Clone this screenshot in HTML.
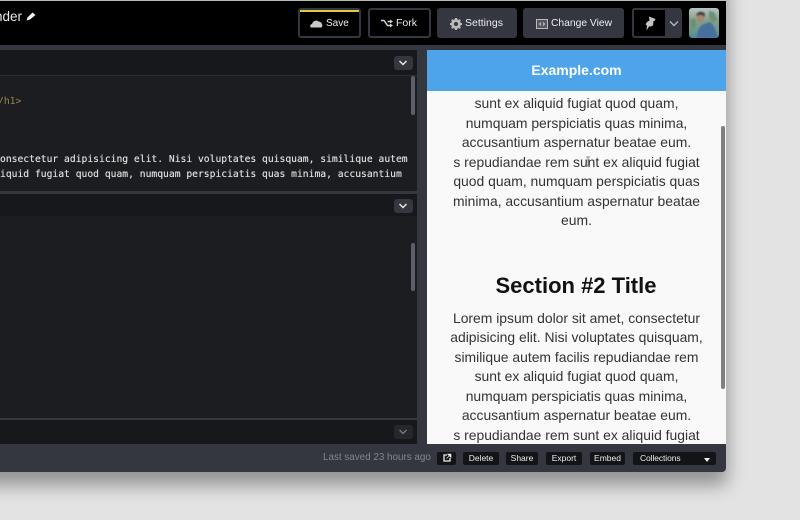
<!DOCTYPE html>
<html><head><meta charset="utf-8"><style>
*{box-sizing:border-box;margin:0;padding:0}
html,body{width:800px;height:520px;overflow:hidden;background:#e3e3e3;font-family:"Liberation Sans",sans-serif}
.a{position:absolute}
.win{left:-30px;top:-30px;width:756px;height:502px;background:#343640;border-radius:0 0 4px 0;box-shadow:1px 13px 18px rgba(0,0,0,.36)}
.btn{position:absolute;top:8px;height:30px;border-radius:3px}
.blk{background:#000;border:2px solid #343640}
.gry{background:#343640}
.t{position:absolute;top:17px;color:#ededef;font-size:10.5px;line-height:13px;white-space:nowrap}
.chev{position:absolute;left:393.500px;width:19px;height:14px;background:#343640;border-radius:3px}
.code{position:absolute;left:0;white-space:pre;font:9.68px/15px "DejaVu Sans Mono",monospace;color:#dcdcdc;text-shadow:0 0 .4px #dcdcdc}
.l{position:absolute;left:427px;width:299px;text-align:center;font-size:13.900px;line-height:20px;color:#333;white-space:nowrap}
.f{position:absolute;top:452px;height:13px;background:#131417;border-radius:2px;color:#ededef;font-size:8.500px;line-height:13px;text-align:center}
</style></head><body>
<div class="a win"></div>
<div class="a" style="left:0;top:0;width:726px;height:1px;background:#bbb"></div>
<div class="a" style="left:0;top:1px;width:726px;height:44px;background:#000"></div>
<div class="a" style="left:-20px;top:8px;width:42px;text-align:right;color:#e6e6e6;font-size:13.500px;line-height:18px;white-space:nowrap">nder</div>
<svg class="a" style="left:26px;top:11px" width="10" height="10" viewBox="0 0 10 10"><path d="M.5 9.500l1-3L6.500 1.500 9.500 4 4 8.500z" fill="#f2f2f2"/></svg>

<div class="btn blk" style="left:298px;width:63px"></div>
<div class="a" style="left:300px;top:10px;width:59px;height:2px;background:#e2c84e"></div>
<svg class="a" style="left:310px;top:19px" width="13" height="9" viewBox="0 0 13 9"><path d="M1 8.500C-.5 7.500.2 5.200 2 5 3 2 6.500.5 8.500 2.500c1.800 0 3.500 1.500 3.500 3 .8 1.500 0 3-1 3z" fill="#c9c9cb"/></svg>
<div class="t" style="left:326px;font-size:10px">Save</div>

<div class="btn blk" style="left:368px;width:63px"></div>
<svg class="a" style="left:381px;top:19px" width="12" height="9" viewBox="0 0 12 9"><path d="M0 1.500h3l3.500 5h2.500M6.500 2.500H9" stroke="#d0d0d2" stroke-width="1.500" fill="none"/><path d="M9 .5L12 2.500 9 4.500zM9 4.500l3 2-3 2z" fill="#d0d0d2"/></svg>
<div class="t" style="left:396px">Fork</div>

<div class="btn gry" style="left:437px;width:80px"></div>
<svg class="a" style="left:450px;top:18px" width="12" height="12" viewBox="0 0 12 12"><circle cx="6" cy="6" r="3.500" fill="none" stroke="#b9b9bc" stroke-width="3"/><path d="M6 0v2.500M6 9.500V12M0 6h2.500M9.500 6H12M1.800 1.800l1.700 1.700M8.500 8.500l1.700 1.700M1.800 10.200l1.700-1.700M8.500 3.500l1.700-1.700" stroke="#b9b9bc" stroke-width="2"/></svg>
<div class="t" style="left:465px">Settings</div>

<div class="btn gry" style="left:523px;width:101px"></div>
<svg class="a" style="left:536px;top:19px" width="12" height="10" viewBox="0 0 12 10"><rect x=".5" y=".5" width="11" height="9" fill="#55565e" stroke="#b9b9bc"/><path d="M5 3.500L3.500 5 5 6.500M7 3.500L8.500 5 7 6.500" stroke="#d5d5d7" fill="none" stroke-width=".9"/></svg>
<div class="t" style="left:551px;font-size:10.300px">Change View</div>

<div class="btn gry" style="left:632px;width:50px"></div>
<div class="btn blk" style="left:632px;width:35px;border-radius:3px 0 0 3px"></div>
<svg class="a" style="left:644px;top:16px" width="12" height="15" viewBox="0 0 12 15"><path d="M5 .5L11.500 3 10.500 5H9.500L9 9.500 6.500 10.500H5L2.500 14.500 3 9.500 1.500 8.500 3 6 5.500 4.500z" fill="#c4c4c6"/></svg>
<svg class="a" style="left:669px;top:20px" width="10" height="7" viewBox="0 0 10 7"><path d="M1 1.500l4 4 4-4" fill="none" stroke="#b8b8bb" stroke-width="1.400"/></svg>

<svg class="a" style="left:689px;top:8px;border-radius:3px" width="30" height="30" viewBox="0 0 30 30"><defs><linearGradient id="g" x1="0" y1="0" x2="0" y2="1"><stop offset="0" stop-color="#b8c4c4"/><stop offset=".4" stop-color="#83a08a"/><stop offset=".75" stop-color="#6b9a8c"/><stop offset="1" stop-color="#4f8a9c"/></linearGradient><filter id="b"><feGaussianBlur stdDeviation=".7"/></filter></defs><rect width="30" height="30" fill="url(#g)"/><g filter="url(#b)"><path d="M20 3l5 1 3 7-4 4-4-6zM1 12l5-2 1 8-4 4z" fill="#6e8f74"/><path d="M8 30c0-7 2-12 7-14l6-2c3 2 5 6 6 10l2 6z" fill="#4a6f9b"/><ellipse cx="11.500" cy="9" rx="4" ry="5.500" fill="#a98672"/><path d="M7.500 6c2-3 7-3 8.500 0l-.5 3c-2-2.500-5-2.500-8-1z" fill="#47423e"/></g></svg>

<!-- left panes -->
<div class="a" style="left:0;top:50px;width:417px;height:394px;background:#1c1d21"></div>
<div class="a" style="left:0;top:50px;width:417px;height:26px;background:#17181b;border-bottom:1px solid #2c2e35"></div>
<div class="chev" style="top:56px"></div>
<svg class="a" style="left:398px;top:60px" width="10" height="6" viewBox="0 0 10 6"><path d="M1.500 1l3.500 3.500L8.500 1" fill="none" stroke="#e6e6e6" stroke-width="1.500"/></svg>
<div class="a" style="left:411px;top:76px;width:4px;height:39px;background:#5c5f69;border-radius:2px"></div>
<div class="code" style="top:94px;left:-2px;color:#97854f;text-shadow:none">/h1&gt;</div>
<div class="code" style="top:152px">onsectetur adipisicing elit. Nisi voluptates quisquam, similique autem</div>
<div class="code" style="top:167px">iquid fugiat quod quam, numquam perspiciatis quas minima, accusantium</div>

<div class="a" style="left:0;top:191px;width:417px;height:3px;background:#343640"></div>
<div class="a" style="left:0;top:194px;width:417px;height:22px;background:#17181b"></div>
<div class="chev" style="top:198.500px"></div>
<svg class="a" style="left:398px;top:202.500px" width="10" height="6" viewBox="0 0 10 6"><path d="M1.500 1l3.500 3.500L8.500 1" fill="none" stroke="#e6e6e6" stroke-width="1.500"/></svg>
<div class="a" style="left:411px;top:243px;width:4px;height:48px;background:#5c5f69;border-radius:2px"></div>

<div class="a" style="left:0;top:418px;width:417px;height:2px;background:#343640"></div>
<div class="a" style="left:0;top:420px;width:417px;height:24px;background:#17181b"></div>
<div class="chev" style="top:425px;background:#26272c"></div>
<svg class="a" style="left:398px;top:429px" width="10" height="6" viewBox="0 0 10 6"><path d="M1.500 1l3.500 3.500L8.500 1" fill="none" stroke="#74767c" stroke-width="1.500"/></svg>

<!-- preview -->
<div class="a" style="left:427px;top:50px;width:299px;height:394px;background:#f9f9f9"></div>
<div class="a" style="left:427px;top:50px;width:299px;height:41px;background:#4ea4e8;color:#fff;font-weight:bold;font-size:14px;line-height:40px;text-align:center">Example.com</div>
<div class="l" style="top:93px">sunt ex aliquid fugiat quod quam,</div>
<div class="l" style="top:112.500px">numquam perspiciatis quas minima,</div>
<div class="l" style="top:132px">accusantium aspernatur beatae eum.</div>
<div class="l" style="top:151.500px">s repudiandae rem sunt ex aliquid fugiat</div>
<div class="l" style="top:171px">quod quam, numquam perspiciatis quas</div>
<div class="l" style="top:190.500px">minima, accusantium aspernatur beatae</div>
<div class="l" style="top:210px">eum.</div>
<svg class="a" style="left:585px;top:156px" width="6" height="11" viewBox="0 0 6 11"><path d="M1 1h4M3 1v9M1 10h4" stroke="#8a8a8a" stroke-width="1" fill="none"/></svg>
<div class="l" style="top:272px;font-size:22px;font-weight:bold;line-height:28px;color:#111;padding-right:1px">Section #2 Title</div>
<div class="l" style="top:307.500px">Lorem ipsum dolor sit amet, consectetur</div>
<div class="l" style="top:327px">adipisicing elit. Nisi voluptates quisquam,</div>
<div class="l" style="top:346.500px">similique autem facilis repudiandae rem</div>
<div class="l" style="top:366px">sunt ex aliquid fugiat quod quam,</div>
<div class="l" style="top:385.500px">numquam perspiciatis quas minima,</div>
<div class="l" style="top:405px">accusantium aspernatur beatae eum.</div>
<div class="l" style="top:424.500px;height:19.500px;overflow:hidden">s repudiandae rem sunt ex aliquid fugiat</div>
<div class="a" style="left:721px;top:126px;width:4px;height:263px;background:#7f7f7f;border-radius:2px"></div>

<!-- footer -->
<div class="a" style="left:323px;top:451px;color:#85868c;font-size:9.850px;line-height:14px;white-space:nowrap">Last saved 23 hours ago</div>
<div class="f" style="left:437px;width:19px"></div>
<svg class="a" style="left:442px;top:453px" width="10" height="10" viewBox="0 0 10 10"><path d="M5 2H2v6h6V5" fill="none" stroke="#eee" stroke-width="1.300"/><path d="M4.500 5.500L8 2M5.500 1H9v3.500z" stroke="#eee" fill="#eee" stroke-width=".6"/></svg>
<div class="f" style="left:463px;width:36px">Delete</div>
<div class="f" style="left:506px;width:32px">Share</div>
<div class="f" style="left:546px;width:36px">Export</div>
<div class="f" style="left:590px;width:35px">Embed</div>
<div class="f" style="left:633px;width:83px;text-align:left;padding-left:7px;letter-spacing:-.1px">Collections</div>
<div class="a" style="left:704px;top:458px;border:3px solid transparent;border-top:4px solid #eee;border-bottom:0"></div>
</body></html>
